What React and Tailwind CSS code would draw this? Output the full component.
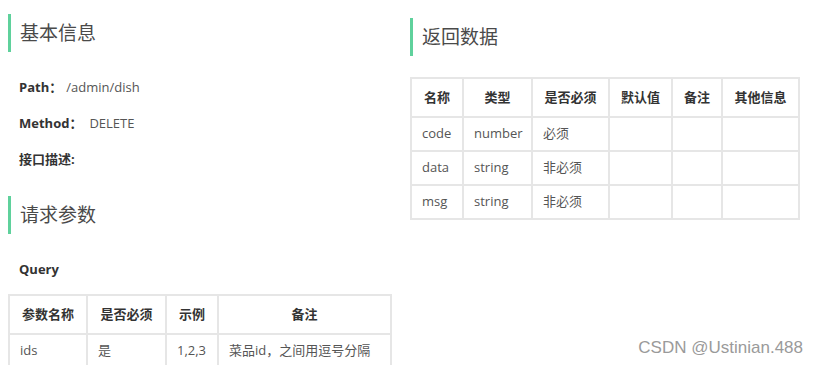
import React from 'react';

const font = { fontFamily: '"Open Sans", "Noto Sans CJK SC", sans-serif' };

function SectionTitle({ children }) {
    return (
        <div className="h-[38px] flex items-center border-l-[3px] border-[#5fd19c] pl-[9px]">
            <span className="text-[19px] text-[#4a4a4a] leading-none">{children}</span>
        </div>
    );
}

function InfoRow({ label, value, valueGap }) {
    return (
        <div className="h-[36px] flex items-center pl-[11px] text-[13px]">
            <span className="font-bold text-[#333]">{label}</span>
            {value && <span className={`text-[#555] ${valueGap}`}>{value}</span>}
        </div>
    );
}

const queryCols = [
    { title: '参数名称', w: 'w-[78px]' },
    { title: '是否必须', w: 'w-[79px]' },
    { title: '示例', w: 'w-[52px]' },
    { title: '备注', w: 'w-[173px]' },
];

const queryRows = [['ids', '是', '1,2,3', '菜品id，之间用逗号分隔']];

const resCols = [
    { title: '名称', w: 'w-[52px]' },
    { title: '类型', w: 'w-[69px]' },
    { title: '是否必须', w: 'w-[77px]' },
    { title: '默认值', w: 'w-[63px]' },
    { title: '备注', w: 'w-[50px]' },
    { title: '其他信息', w: 'w-[77px]' },
];

const resRows = [
    ['code', 'number', '必须', '', '', ''],
    ['data', 'string', '非必须', '', '', ''],
    ['msg', 'string', '非必须', '', '', ''],
];

function DocTable({ cols, rows, width }) {
    return (
        <table className={`border-collapse table-fixed text-[13px] ${width}`}>
            <thead>
                <tr className="h-[39px]">
                    {cols.map((c) => (
                        <th key={c.title} className={`${c.w} border-2 border-[#e6e6e6] font-bold text-[#333] text-center`}>
                            {c.title}
                        </th>
                    ))}
                </tr>
            </thead>
            <tbody>
                {rows.map((r, i) => (
                    <tr key={i} className="h-[34px]">
                        {r.map((cell, j) => (
                            <td key={j} className="border-2 border-[#e6e6e6] px-[10px] text-[#555] whitespace-nowrap">
                                {cell}
                            </td>
                        ))}
                    </tr>
                ))}
            </tbody>
        </table>
    );
}

export default function App() {
    return (
        <div className="relative w-[818px] h-[365px] bg-white overflow-hidden" style={font}>
            <div className="flex pl-[8px] gap-[20px]">
                {/* left column: basic info + request params */}
                <div className="w-[382px] flex flex-col pt-[14px]">
                    <SectionTitle>基本信息</SectionTitle>
                    <div className="mt-[18px]">
                        <InfoRow label="Path：" value="/admin/dish" valueGap="ml-[4px]" />
                        <InfoRow label="Method：" value="DELETE" valueGap="ml-[7px]" />
                        <InfoRow label="接口描述:" />
                    </div>
                    <div className="mt-[18px]">
                        <SectionTitle>请求参数</SectionTitle>
                    </div>
                    <div className="mt-[18px] h-[36px] flex items-center pl-[11px] text-[13px] font-bold text-[#333]">
                        Query
                    </div>
                    <div className="mt-[6px]">
                        <DocTable cols={queryCols} rows={queryRows} width="w-[382px]" />
                    </div>
                </div>

                {/* right column: response data */}
                <div className="w-[387px] flex flex-col pt-[18px]">
                    <SectionTitle>返回数据</SectionTitle>
                    <div className="mt-[21px]">
                        <DocTable cols={resCols} rows={resRows} width="w-[387px]" />
                    </div>
                </div>
            </div>

            <div
                className="absolute right-[15px] bottom-[9px] text-[17px] leading-none text-[#9a9a9a]"
                style={{ fontFamily: '"Liberation Sans", Arial, sans-serif' }}
            >
                CSDN @Ustinian.488
            </div>
        </div>
    );
}
